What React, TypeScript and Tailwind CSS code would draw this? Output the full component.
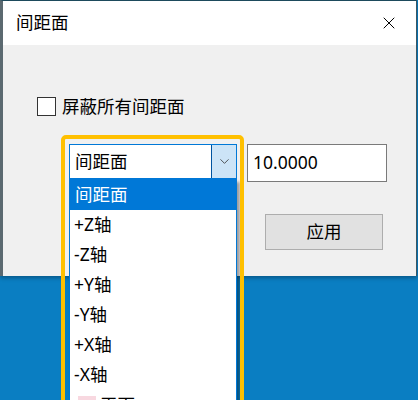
import { ChevronDown, X } from 'lucide-react';

const items = ['+Z轴', '-Z轴', '+Y轴', '-Y轴', '+X轴', '-X轴'];

const App = () => {
  return (
    <div
      className="relative w-[418px] h-[400px] overflow-hidden bg-[#0a7ec2] text-[17.5px] text-black"
      style={{ fontFamily: '"Noto Sans", "Noto Sans CJK SC", sans-serif' }}
    >
      {/* dialog window */}
      <div className="flex w-[417px] h-[276px] border-t border-[#1d4a5c] border-l-[3px] border-l-[#5b6970] border-r border-r-[#3a5866] flex-col bg-[#f0f0f0] shadow-[0_2px_4px_rgba(0,0,0,0.3)]">
        <div className="flex h-[44px] items-center justify-between bg-white pl-[13px] pr-[17px]">
          <span className="leading-none">间距面</span>
          <X size={20} strokeWidth={1.2} />
        </div>

        <div className="flex flex-col pl-[34px] pt-[52px]">
          <label className="flex items-center gap-[6px]">
            <span className="h-[19px] w-[19px] border border-[#333] bg-white" />
            <span className="leading-none">屏蔽所有间距面</span>
          </label>

          <div className="mt-[28px] flex items-start">
            <div className="ml-[32px] flex h-[35px] w-[168px] items-stretch border border-[#0078d7] bg-white">
              <span className="flex flex-1 items-center pl-[5px] leading-none">间距面</span>
              <span className="flex w-[25px] items-center justify-center border-l border-[#0054a0] bg-[#cce4f7]">
                <ChevronDown size={15} strokeWidth={1.3} className="text-[#333]" />
              </span>
            </div>
            <div className="ml-[10px] flex h-[38px] w-[140px] items-center border border-[#7a7a7a] bg-white pl-[5px] leading-none">
              10.0000
            </div>
          </div>

          <button className="ml-[228px] mt-[32px] h-[36px] w-[118px] border border-[#adadad] bg-[#e1e1e1] leading-none">
            应用
          </button>
        </div>
      </div>

      {/* open dropdown list */}
      <div className="absolute left-[69px] top-[179px] w-[168px] border-x border-[#0078d7] bg-white shadow-[3px_3px_3px_rgba(0,0,0,0.35)]">
        <div className="flex h-[31px] items-center bg-[#0078d7] pl-[5px] leading-none text-white">间距面</div>
        {items.map(t => (
          <div key={t} className="flex h-[30px] items-center pl-[4px] leading-none">
            {t}
          </div>
        ))}
        <div className="flex h-[30px] items-center gap-[4px] pl-[8px] leading-none">
          <span className="h-[18px] w-[18px] bg-[#f8d8e0]" />
          <span>平面</span>
        </div>
      </div>

      {/* highlight annotation */}
      <div className="pointer-events-none absolute left-[61px] top-[135px] h-[290px] w-[183px] rounded-[5px] border-[4px] border-[#ffc000]" />
    </div>
  );
};

export default App;
